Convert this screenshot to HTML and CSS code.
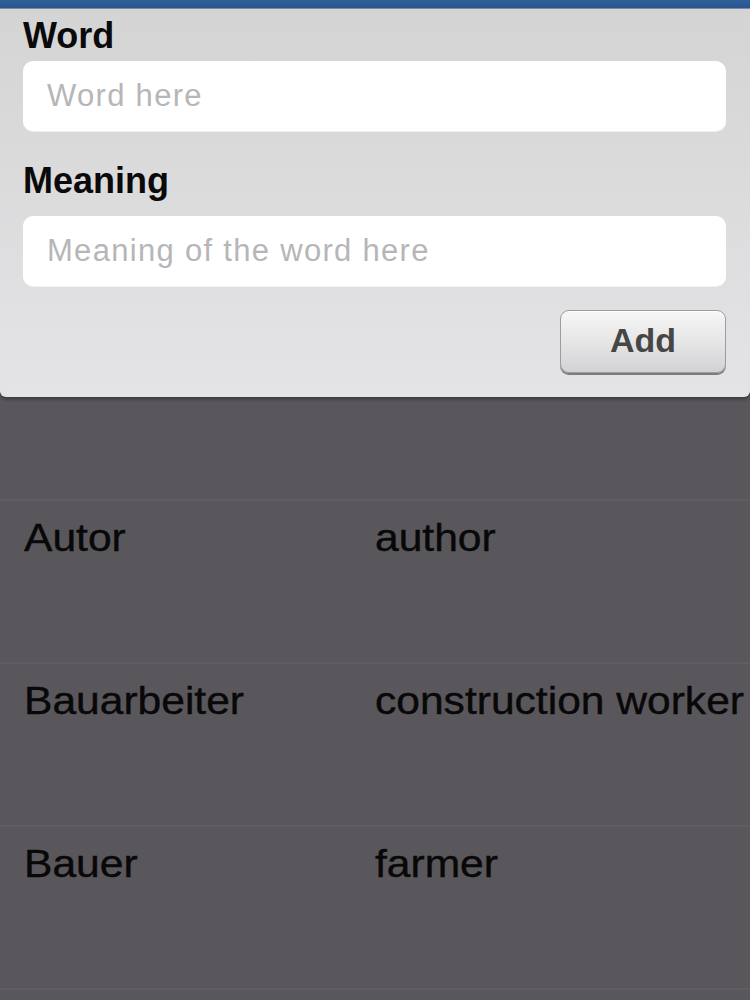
FILE: index.html
```html
<!DOCTYPE html>
<html>
<head>
<meta charset="utf-8">
<link rel="stylesheet" href="styles.css">
</head>
<body>
<div class="topbar"></div>
<form class="panel">
  <label class="label" for="word">Word</label>
  <input class="field" id="word" type="text" placeholder="Word here">
  <label class="label label-second" for="meaning">Meaning</label>
  <input class="field field-second" id="meaning" type="text" placeholder="Meaning of the word here">
  <div class="actions">
    <button class="add" type="button">Add</button>
  </div>
</form>
<ul class="list">
  <li class="row row-partial"></li>
  <li class="row"><span class="cell cell-word"><span class="txt">Autor</span></span><span class="cell"><span class="txt">author</span></span></li>
  <li class="row"><span class="cell cell-word"><span class="txt">Bauarbeiter</span></span><span class="cell"><span class="txt">construction worker</span></span></li>
  <li class="row"><span class="cell cell-word"><span class="txt">Bauer</span></span><span class="cell"><span class="txt">farmer</span></span></li>
  <li class="row row-tail"></li>
</ul>
</body>
</html>
```
FILE: styles.css
```css
html, body {
  margin: 0;
  padding: 0;
}
body {
  width: 750px;
  height: 1000px;
  overflow: hidden;
  background: #59575b;
  font-family: "Liberation Sans", Arial, Helvetica, sans-serif;
}
.topbar {
  height: 9px;
  background: linear-gradient(#2f5e98, #2a5690);
  border-bottom: 1px solid #7a8aa0;
  box-sizing: border-box;
}
.panel {
  display: flex;
  flex-direction: column;
  margin: 0;
  padding: 7px 23px 24px 23px;
  background: linear-gradient(#d5d4d5, #e4e3e5);
  border-radius: 0 0 6px 6px;
  box-shadow: 0 1px 0 #3e3d40, 0 3px 3px rgba(0,0,0,0.25);
  position: relative;
  z-index: 1;
}
.label {
  display: block;
  font-size: 36px;
  line-height: 40px;
  height: 40px;
  font-weight: bold;
  color: #0a0a0a;
  margin-bottom: 5px;
}
.label-second {
  margin-top: 30px;
  margin-bottom: 15px;
}
.field {
  display: block;
  height: 70px;
  box-sizing: border-box;
  width: 703px;
  border: none;
  border-radius: 10px;
  background: #ffffff;
  padding: 0 24px;
  font-family: "Liberation Sans", Arial, Helvetica, sans-serif;
  font-size: 31px;
  letter-spacing: 1.3px;
  color: #222;
  outline: none;
  box-shadow: 0 1px 0 rgba(255,255,255,0.6);
}
.field::placeholder {
  color: #b6b6b8;
}
.actions {
  display: flex;
  justify-content: flex-end;
  margin-top: 24px;
}
.add {
  width: 166px;
  height: 63px;
  margin-right: 1px;
  border: 1px solid #9c9c9e;
  border-radius: 9px;
  background: linear-gradient(#f6f6f6, #e6e6e7 50%, #d2d2d4);
  box-shadow: 0 2px 0 #7c7c7e, inset 0 1px 0 #ffffff;
  font-family: "Liberation Sans", Arial, Helvetica, sans-serif;
  font-size: 34px;
  font-weight: bold;
  color: #464646;
  padding: 0 0 2px 0;
}
.list {
  list-style: none;
  margin: 0;
  padding: 0;
}
.row {
  display: grid;
  grid-template-columns: 375px 1fr;
  box-sizing: border-box;
  height: 163px;
  border-top: 2px solid #5f5d61;
  padding-top: 18px;
}
.row-partial {
  height: 102px;
  border-top: none;
}
.row-tail {
  height: 12px;
  padding-top: 0;
}
.cell {
  font-size: 38px;
  line-height: 38px;
  color: #080808;
  white-space: nowrap;
  -webkit-text-stroke: 0.4px #080808;
}
.cell-word {
  padding-left: 24px;
}
.txt {
  display: inline-block;
  transform: scaleX(1.12);
  transform-origin: left center;
}
```
